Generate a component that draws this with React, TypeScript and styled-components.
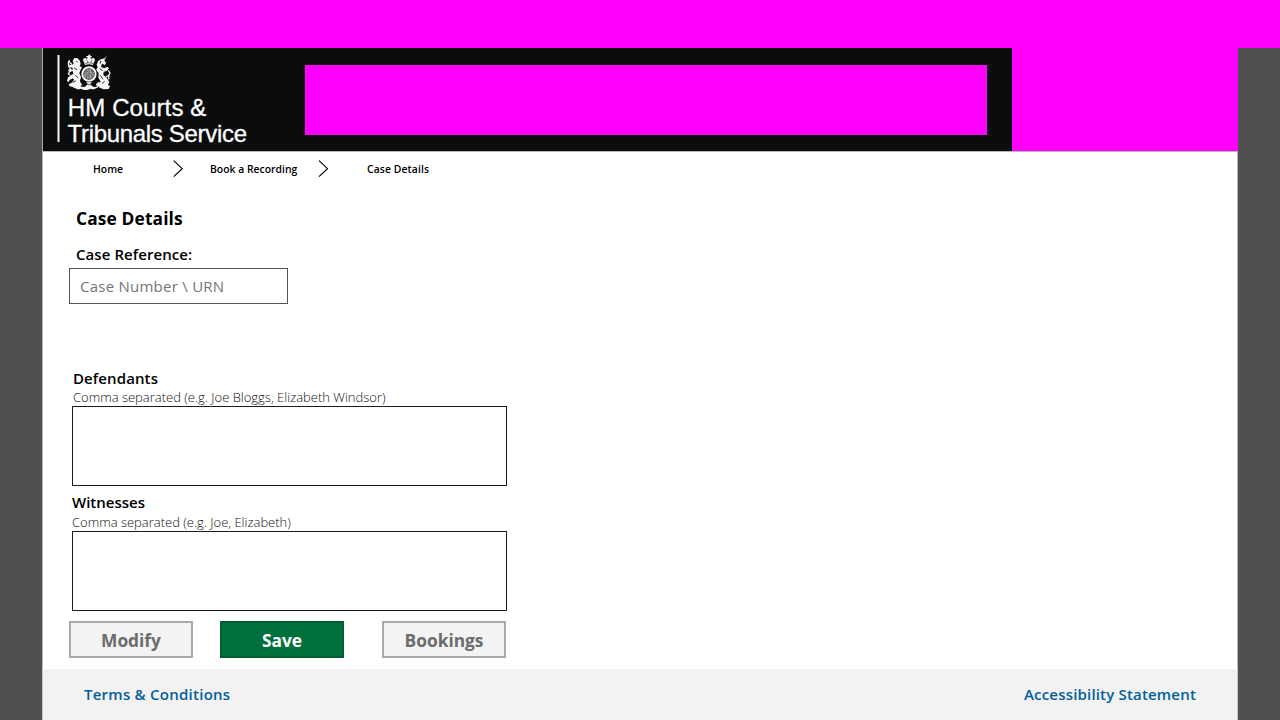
import React from "react";
import styled, { createGlobalStyle } from "styled-components";

const GlobalStyle = createGlobalStyle`
  *, *::before, *::after { box-sizing: border-box; }
  body { margin: 0; background: #505050; overflow: hidden; font-family: "Open Sans", sans-serif; color: #000; }
`;

const Page = styled.div`
  height: 720px;
  display: flex;
  flex-direction: column;
`;

const TopBar = styled.div`
  height: 48px;
  flex: none;
  background: #ff00ff;
`;

const Frame = styled.div`
  flex: 1;
  width: 1196px;
  margin-left: 42px;
  background: #fff;
  display: flex;
  flex-direction: column;
`;

const Header = styled.header`
  height: 103px;
  display: flex;
  border-left: 1px solid #a9aaaa;
  background: #ff00ff;
`;

const Brand = styled.div`
  width: 969px;
  display: flex;
  align-items: flex-start;
  background: #0b0c0c;
`;

const Logo = styled.svg`
  width: 262px;
  height: 103px;
  flex: none;
  display: block;
`;

const Banner = styled.div`
  width: 682px;
  height: 70px;
  margin-top: 17px;
  background: #ff00ff;
`;

const Main = styled.main`
  height: 518px;
  border: 1px solid #b8b8b8;
  border-bottom: 0;
  padding-left: 26px;
`;

const Crumbs = styled.nav`
  height: 34px;
  display: flex;
  align-items: center;
  font-size: 10.4px;
  font-weight: 600;
`;

const Crumb = styled.span<{ $width: number; $gap: number; $spacing?: number }>`
  width: ${(p) => p.$width}px;
  margin-left: ${(p) => p.$gap}px;
  letter-spacing: ${(p) => p.$spacing ?? 0}px;
  white-space: nowrap;
`;

const Chevron = styled.svg`
  width: 12px;
  height: 18px;
  fill: none;
  stroke: #000;
  stroke-width: 1.15;
`;

const Title = styled.h1`
  margin: 20px 0 0 7px;
  font-size: 17.33px;
  line-height: 24px;
  font-weight: 700;
  letter-spacing: 0.14px;
`;

const Label = styled.label<{ $top: number; $left: number; $spacing?: number }>`
  display: block;
  margin: ${(p) => p.$top}px 0 0 ${(p) => p.$left}px;
  font-size: 15px;
  line-height: 20px;
  font-weight: 600;
  letter-spacing: ${(p) => p.$spacing ?? 0}px;
`;

const TextInput = styled.input`
  display: block;
  width: 219px;
  height: 36px;
  margin: 4px 0 0 0.4px;
  padding: 0 9.6px;
  border: 1px solid #555;
  border-radius: 0;
  background: #fff;
  font: 400 15px "Open Sans", sans-serif;
  letter-spacing: 0.25px;
  outline: 0;
  &::placeholder { color: #757575; opacity: 1; }
`;

const Hint = styled.p<{ $left: number; $drop: number }>`
  height: ${(p) => 18 + p.$drop}px;
  margin: 0 0 0 ${(p) => p.$left}px;
  padding-top: ${(p) => p.$drop}px;
  font-size: 13px;
  line-height: 18px;
  font-weight: 300;
  color: #111;
`;

const TextArea = styled.textarea`
  display: block;
  width: 435px;
  height: 80px;
  margin: 0 0 0 3px;
  border: 1px solid #1c1c1c;
  border-radius: 0;
  background: #fff;
  resize: none;
  outline: 0;
`;

const Actions = styled.div`
  display: flex;
  margin-top: 10px;
`;

const Button = styled.button<{ $primary?: boolean; $gap?: number }>`
  width: 124px;
  height: 37px;
  margin-left: ${(p) => p.$gap ?? 0}px;
  padding: 0;
  border: 2px solid ${(p) => (p.$primary ? "#005f33" : "#a9a9a9")};
  background: ${(p) => (p.$primary ? "#00703c" : "#f3f3f3")};
  color: ${(p) => (p.$primary ? "#fff" : "#6c6c6c")};
  font: 700 17.33px "Open Sans", sans-serif;
`;

const Footer = styled.footer`
  flex: 1;
  display: flex;
  justify-content: space-between;
  padding: 15px 41px 0;
  border: solid #c9c9c9;
  border-width: 0 1px;
  background: #f3f2f1;
`;

const FooterLink = styled.a<{ $spacing: number }>`
  color: #00609f;
  font-size: 15px;
  line-height: 21px;
  font-weight: 600;
  letter-spacing: ${(p) => p.$spacing}px;
`;

const RoyalArms = () => (
  <g fill="#f5f5f5" transform="translate(23 4) scale(.3333)">
    {/* crown */}
    <path d="M67 8h6v4h4v4h-4l2 5q6-6 11-1 3 5-3 12l-2 7q-12-4-24 0l-2-7q-6-7-3-12 5-5 11 1l2-5h-4v-4h6z" />
    <path d="M62 23l4 10m12-10-4 10M58 34q12-3 24 0" stroke="#333" strokeWidth="2" fill="none" />
    {/* lion */}
    <path d="M25 18l10 1 7 8 2 9-3 5 7 6-4 6-4 10 5 12-3 12 3 9-8 6-13 4-13-3-3-6 8-4 8-9-3-5-9 4-5 8-4-5 3-10 9-7 7-3-2-9-10 4-4-8 8-2 7 2-2-6-9-2-1-7 9 1 5-3-3-10z" />
    <path d="M11 24l-4 7 1 12 5 7-2 8-4 8 5 3M9 29l10 9" stroke="#eee" strokeWidth="4" fill="none" />
    <path d="M24 48l9 5M28 70l9 8M31 28l4 2M20 92l10-6" stroke="#333" strokeWidth="3" />
    {/* unicorn */}
    <path d="M124 10l-9 15 5 8-3 6-9-4-3 9 9 5 10-5 5 5-7 8-9 2-1 10 10 8 8 13-4 8 6 5-4 8-15 1-12-5-5-8 8-10-7-12 1-14-8-9 5-8-3-8 4-10 8-6 12-3z" />
    <path d="M127 55l5 8-5 9 2 10M120 73l11-1" stroke="#eee" strokeWidth="4" fill="none" />
    <path d="M101 49l9 7M103 70l8 12M108 95l8-7M105 26l-3 9" stroke="#333" strokeWidth="3" />
    {/* shield with garter */}
    <circle cx="69" cy="66" r="25" fill="#0b0c0c" />
    <circle cx="69" cy="66" r="23" />
    <circle cx="69" cy="66" r="17" fill="#222" />
    <circle cx="69" cy="66" r="15" fill="#aaa" />
    <path d="M69 51v30M54 66h30M58 58h8m8 0h8m-22 14h7m8 0h6M62 54l-2 10m17-10 2 10m-17 5v8m16-8v8" stroke="#555" strokeWidth="2.500" />
    {/* motto scroll */}
    <path d="M28 94l13-4 7 7-2 6q8 4 13 0l6-7-5-5h18l-5 5 6 7q5 4 13 0l-2-6 7-7 13 4-10 4-3 8-13 6q-8 0-11-2-7 5-14 4-7 1-14-4-3 2-11 2l-13-6-3-8z" />
    <path d="M63 96q6 6 12 0M50 104l-6-2m44 2 6-2" stroke="#222" strokeWidth="2.500" fill="none" />
  </g>
);

export default function App() {
  return (
    <>
      <GlobalStyle />
      <Page>
        <TopBar />
        <Frame>
          <Header>
            <Brand>
              <Logo viewBox="0 0 262 103">
                <rect x="14.500" y="7" width="2" height="87" fill="#f3f3f3" />
                <RoyalArms />
                <g fill="#fff" stroke="#fff" strokeWidth=".3" fontFamily="Liberation Sans, Arial, sans-serif" fontSize="24">
                  <text x="24.800" y="68" textLength="138.500">HM Courts &amp;</text>
                  <text x="24.500" y="94" textLength="179.500">Tribunals Service</text>
                </g>
              </Logo>
              <Banner />
            </Brand>
          </Header>
          <Main>
            <Crumbs>
              <Crumb $gap={24} $width={79}>Home</Crumb>
              <Chevron viewBox="0 0 12 18"><path d="M1.700 .7 10.200 8.700 1.700 16.700" /></Chevron>
              <Crumb $gap={26} $width={107}>Book a Recording</Crumb>
              <Chevron viewBox="0 0 12 18"><path d="M2 .7 10.500 8.700 2 16.700" /></Chevron>
              <Crumb $gap={38} $width={80} $spacing={0.09}>Case Details</Crumb>
            </Crumbs>
            <Title>Case Details</Title>
            <Label $top={14} $left={7} $spacing={0.07}>Case Reference:</Label>
            <TextInput placeholder="Case Number \ URN" />
            <Label $top={64} $left={4} $spacing={0.1}>Defendants</Label>
            <Hint $left={4} $drop={0}>Comma separated (e.g. Joe Bloggs, Elizabeth Windsor)</Hint>
            <TextArea />
            <Label $top={6} $left={3}>Witnesses</Label>
            <Hint $left={3} $drop={1}>Comma separated (e.g. Joe, Elizabeth)</Hint>
            <TextArea />
            <Actions>
              <Button>Modify</Button>
              <Button $primary $gap={27}>Save</Button>
              <Button $gap={38}>Bookings</Button>
            </Actions>
          </Main>
          <Footer>
            <FooterLink $spacing={0.25}>Terms &amp; Conditions</FooterLink>
            <FooterLink $spacing={0.18}>Accessibility Statement</FooterLink>
          </Footer>
        </Frame>
      </Page>
    </>
  );
}
